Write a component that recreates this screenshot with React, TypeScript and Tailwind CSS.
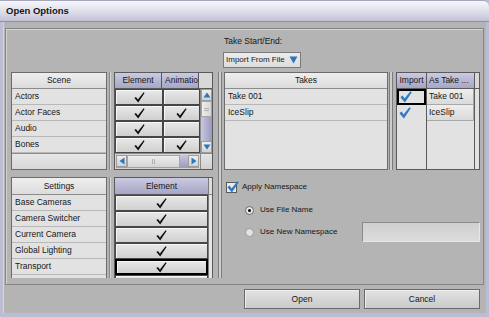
import React from "react";

const font = "font-['Liberation_Sans',Arial,sans-serif]";
const lav = "bg-linear-to-b from-[#cacae2] to-[#a6a6c6]";
const hdr = "bg-linear-to-b from-[#eeeeee] to-[#dcdcdc]";

function Tick() {
  return (
    <svg width="11" height="11" viewBox="0 0 11 11">
      <path d="M0.4 5.9 L1.9 4.9 L3.9 7.5 L9.6 0.3 L10.6 1 L4.2 10.5 Z" fill="#111" />
    </svg>
  );
}

function BlueTick({ size = 12 }: { size?: number }) {
  return (
    <svg width={size} height={size} viewBox="0 0 12 12">
      <path d="M0.4 6.2 L2.6 4.6 L4.6 7.4 L10.4 0.2 L11.8 1.2 L4.9 11.6 Z" fill="#2c78c2" />
    </svg>
  );
}

function ArrowBtn({ dir }: { dir: "up" | "down" | "left" | "right" }) {
  const tri = {
    up: "M0.5 6.5 L4 1.5 L7.5 6.5 Z",
    down: "M0.5 1.5 L7.5 1.5 L4 6.5 Z",
    left: "M6.5 0.5 L6.5 7.5 L1.5 4 Z",
    right: "M1.5 0.5 L1.5 7.5 L6.5 4 Z",
  }[dir];
  return (
    <div className="w-[11px] h-[12px] shrink-0 bg-linear-to-b from-[#eeeeee] to-[#d2d2d2] border border-[#9c9c9c] flex items-center justify-center">
      <svg width="8" height="8" viewBox="0 0 8 8">
        <path d={tri} fill="#2a78bc" />
      </svg>
    </div>
  );
}

function Cell({ checked, w, focus }: { checked?: boolean; w: string; focus?: boolean }) {
  return (
    <div
      className={`${w} h-[16px] shrink-0 ${focus ? "border-2 border-black" : "border border-[#464646]"} bg-linear-to-b from-[#e8e8e8] to-[#d0d0d0] shadow-[inset_1px_1px_0_#f6f6f6] flex items-center justify-center`}
    >
      {checked ? <Tick /> : null}
    </div>
  );
}

function NameRows({ rows }: { rows: string[] }) {
  return (
    <>
      {rows.map((r, i) => (
        <div key={i} className="h-[16px] shrink-0 border-b border-[#b8b8b8] pl-[3px] leading-[15px] whitespace-nowrap">
          {r}
        </div>
      ))}
    </>
  );
}

export default function App() {
  return (
    <div className={`w-[489px] h-[317px] overflow-hidden flex flex-col bg-[#bcbcd2] text-[#161616] text-[8.5px] ${font}`}>
      {/* Title bar */}
      <div className="h-[22px] shrink-0 rounded-tr-[6px] bg-linear-to-b from-[#f6f6fb] via-[#e0e0ec] to-[#c2c2d6] border-t border-[#a6a6bc] border-b border-b-[#8e8e9e] pl-[6px] pt-[4px] leading-[12px] text-[9.5px] font-bold">
        Open Options
      </div>

      {/* Window frame */}
      <div className="flex-1 px-[3px] pb-[4px] flex flex-col">
        <div className="flex-1 bg-[#b4b4b4] flex flex-col border-l border-[#d6d6d6]">
          {/* Inner panel */}
          <div className="ml-[1px] mt-[6px] w-[479px] h-[257px] shrink-0 border border-[#858585] shadow-[inset_1px_1px_0_#d4d4d4] flex">
            {/* Left column */}
            <div className="ml-[5px] w-[202px] pt-[43px] flex flex-col">
              {/* Upper left */}
              <div className="h-[98px] flex">
                <div className="w-[96px] h-[98px] border border-[#6c6c6c] bg-[#e2e2e2] flex flex-col">
                  <div className={`h-[16px] shrink-0 ${hdr} border-b border-[#8c8c8c] text-center leading-[15px]`}>Scene</div>
                  <NameRows rows={["Actors", "Actor Faces", "Audio", "Bones"]} />
                  <div className="flex-1 border-t border-[#8c8c8c] bg-linear-to-b from-[#e6e6e6] to-[#d8d8d8]" />
                </div>
                <div className="ml-[2px] w-[2px] h-[98px] border-l border-[#878787] border-r border-r-[#d8d8d8]" />
                <div className="ml-[3px] w-[99px] h-[98px] border border-[#5a5a5a] bg-[#c8c8c8] flex flex-col">
                  <div className="h-[16px] shrink-0 flex border-b border-[#5a5a5a]">
                    <div className={`w-[47px] ${lav} border-r border-[#5a5a5a] text-center leading-[15px]`}>Element</div>
                    <div className={`w-[37px] ${lav} border-r border-[#5a5a5a] pl-[3px] leading-[15px] whitespace-nowrap overflow-hidden`}>Animation</div>
                    <div className="flex-1 bg-[#d8d8d8]" />
                  </div>
                  <div className="h-[64px] shrink-0 flex">
                    <div className="w-[85px] flex flex-col">
                      {[
                        [true, false],
                        [true, true],
                        [true, false],
                        [true, true],
                      ].map((r, i) => (
                        <div key={i} className="flex">
                          <Cell w="w-[48px]" checked={r[0]} />
                          <Cell w="w-[37px]" checked={r[1]} />
                        </div>
                      ))}
                    </div>
                    <div className="flex-1 border-l border-[#8a8a8a] flex flex-col bg-linear-to-r from-[#c8c8de] to-[#9a9abe]">
                      <ArrowBtn dir="up" />
                      <div className="h-[16px] shrink-0 border border-[#a4a4a4] bg-linear-to-r from-[#eeeeee] to-[#d6d6d6] flex flex-col items-center justify-center gap-[1px]">
                        <div className="w-[5px] h-[1px] bg-[#b0b0b0]" />
                        <div className="w-[5px] h-[1px] bg-[#b0b0b0]" />
                      </div>
                      <div className="flex-1" />
                      <ArrowBtn dir="down" />
                    </div>
                  </div>
                  <div className="flex-1 flex border-t border-[#8a8a8a] bg-[#d6d6d6]">
                    <div className="w-[85px] flex items-center px-[1px]">
                      <div className="w-full h-[13px] flex bg-linear-to-b from-[#c8c8de] to-[#9a9abe]">
                        <ArrowBtn dir="left" />
                        <div className="w-[53px] h-[13px] border border-[#a4a4a4] bg-linear-to-b from-[#eeeeee] to-[#d4d4d4] flex items-center justify-center gap-[1px]">
                          <div className="w-[1px] h-[5px] bg-[#b0b0b0]" />
                          <div className="w-[1px] h-[5px] bg-[#b0b0b0]" />
                        </div>
                        <div className="flex-1" />
                        <ArrowBtn dir="right" />
                      </div>
                    </div>
                    <div className="flex-1 border-l border-[#8a8a8a] bg-linear-to-b from-[#e4e4e4] to-[#d0d0d0]" />
                  </div>
                </div>
              </div>

              {/* Lower left */}
              <div className="mt-[7px] h-[101px] flex">
                <div className="w-[96px] h-[101px] overflow-hidden border-x border-t border-[#6c6c6c] bg-[#e2e2e2] flex flex-col">
                  <div className={`h-[17px] shrink-0 ${hdr} border-b border-[#8c8c8c] text-center leading-[16px]`}>Settings</div>
                  <NameRows rows={["Base Cameras", "Camera Switcher", "Current Camera", "Global Lighting", "Transport", ""]} />
                </div>
                <div className="ml-[2px] w-[2px] h-[101px] border-l border-[#878787] border-r border-r-[#d8d8d8]" />
                <div className="ml-[3px] w-[99px] h-[101px] overflow-hidden border-x border-t border-[#5a5a5a] bg-[#d8d8d8] flex">
                  <div className="w-[93px] flex flex-col">
                    <div className={`h-[17px] shrink-0 ${lav} border-b border-[#5a5a5a] text-center leading-[16px]`}>Element</div>
                    {[0, 1, 2, 3].map((i) => (
                      <Cell key={i} w="w-[93px]" checked />
                    ))}
                    <Cell w="w-[93px]" checked focus />
                    <Cell w="w-[93px]" />
                  </div>
                  <div className="flex-1 border-l border-[#7a7a7a] flex flex-col">
                    <div className="h-[17px] shrink-0 bg-[#dcdcdc] border-b border-[#8a8a8a]" />
                    <div className="flex-1 bg-[#e4e4e4]" />
                  </div>
                </div>
              </div>
            </div>

            {/* Vertical separator */}
            <div className="ml-[5px] mt-[43px] w-[4px] h-[206px] border-x border-[#7c7c7c] bg-[#cecece]" />

            {/* Right column */}
            <div className="ml-[2px] w-[256px] flex flex-col">
              <div className="mt-[7px] h-[10px] leading-[10px] whitespace-nowrap">Take Start/End:</div>
              <div className="mt-[6px] -ml-[1px] w-[78px] h-[16px] border border-[#7a7a7a] bg-linear-to-b from-[#ececec] to-[#dcdcdc] flex items-center pl-[2px] pr-[2px]">
                <span className="whitespace-nowrap leading-[14px] text-[8px]">Import From File</span>
                <svg width="9" height="8" viewBox="0 0 9 8" className="ml-auto">
                  <path d="M0.5 0.5 L8.5 0.5 L4.5 7.5 Z" fill="#2a78bc" />
                </svg>
              </div>

              {/* Upper right */}
              <div className="mt-[4px] h-[98px] flex">
                <div className="w-[164px] h-[98px] border border-[#6c6c6c] bg-[#e2e2e2] flex flex-col">
                  <div className={`h-[16px] shrink-0 ${hdr} border-b border-[#8c8c8c] text-center leading-[15px]`}>Takes</div>
                  <NameRows rows={["Take 001", "IceSlip"]} />
                </div>
                <div className="ml-[1px] w-[4px] h-[98px] border-x border-[#7c7c7c] bg-[#cecece]" />
                <div className="ml-[3px] w-[84px] h-[98px] border border-[#5a5a5a] bg-[#e2e2e2] flex flex-col">
                  <div className="h-[16px] shrink-0 flex border-b border-[#5a5a5a]">
                    <div className={`w-[30px] ${lav} border-r border-[#5a5a5a] text-center leading-[15px]`}>Import</div>
                    <div className={`w-[48px] ${lav} border-r border-[#5a5a5a] pl-[2px] leading-[15px] whitespace-nowrap overflow-hidden`}>As Take ...</div>
                    <div className="flex-1 bg-[#d8d8d8]" />
                  </div>
                  <div className="flex-1 flex">
                    <div className="w-[30px] border-r border-[#5a5a5a] flex flex-col">
                      <div className="h-[16px] border-2 border-black flex items-center pl-[1px]">
                        <BlueTick />
                      </div>
                      <div className="h-[16px] flex items-center pl-[2px]">
                        <BlueTick />
                      </div>
                    </div>
                    <div className="w-[48px] border-r border-[#5a5a5a] flex flex-col">
                      {["Take 001", "IceSlip"].map((t) => (
                        <div key={t} className="h-[16px] border-b border-r border-[#a8a8a8] bg-linear-to-b from-[#eeeeee] to-[#dadada] pl-[2px] leading-[15px] whitespace-nowrap">
                          {t}
                        </div>
                      ))}
                    </div>
                    <div className="flex-1" />
                  </div>
                </div>
              </div>

              {/* Lower right */}
              <div className="mt-[10px] h-[14px] flex items-center text-[8px]">
                <div className="ml-[2px] w-[11px] h-[11px] border border-[#5a5a5a] bg-[#eaeaea] relative">
                  <div className="absolute -top-[2px] left-0">
                    <BlueTick size={12} />
                  </div>
                </div>
                <span className="ml-[5px] whitespace-nowrap">Apply Namespace</span>
              </div>
              <div className="mt-[9px] h-[14px] flex items-center text-[8px]">
                <div className="ml-[21px] w-[9px] h-[9px] rounded-full border border-[#6a6a6a] bg-[#e8e8e8] flex items-center justify-center">
                  <div className="w-[3px] h-[3px] rounded-full bg-black" />
                </div>
                <span className="ml-[6px] whitespace-nowrap">Use File Name</span>
              </div>
              <div className="mt-[5px] h-[20px] flex items-center text-[8px]">
                <div className="ml-[21px] w-[9px] h-[9px] rounded-full border border-[#9a9a9a] bg-[#e2e2e2]" />
                <span className="ml-[6px] whitespace-nowrap">Use New Namespace</span>
                <div className="ml-auto w-[118px] h-[20px] border border-[#8a8a8a] border-r-[#e6e6e6] border-b-[#e6e6e6] bg-linear-to-b from-[#cfcfcf] to-[#dcdcdc]" />
              </div>
            </div>
          </div>

          {/* Buttons */}
          <div className="mt-[4px] h-[20px] flex justify-end pr-[6px] gap-[4px]">
            {["Open", "Cancel"].map((b) => (
              <div key={b} className="w-[116px] h-[20px] border border-[#6a6a6a] bg-linear-to-b from-[#e2e2e2] to-[#cacaca] shadow-[inset_1px_1px_0_#f0f0f0] flex items-center justify-center leading-[18px]">
                {b}
              </div>
            ))}
          </div>
        </div>
      </div>
    </div>
  );
}
